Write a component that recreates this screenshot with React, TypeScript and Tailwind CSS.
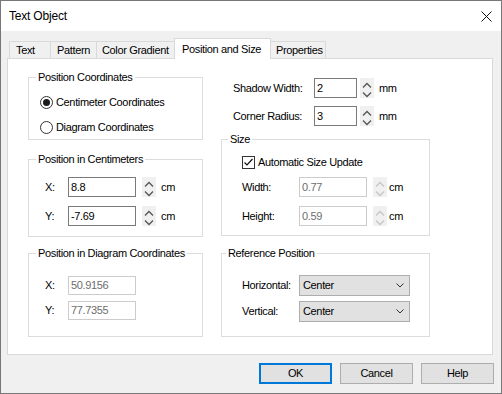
import React from 'react';

function Spin({ disabled }: { disabled?: boolean }) {
  const c = disabled ? '#c6c6c6' : '#555555';
  return (
    <div className="w-[14px] h-[20px] bg-[#f0f0f0] shrink-0">
      <svg width="14" height="20" viewBox="0 0 14 20">
        <path d="M3 9.5 L7 5.5 L11 9.5" fill="none" stroke={c} strokeWidth="1.3" />
        <path d="M3 14.5 L7 18.5 L11 14.5" fill="none" stroke={c} strokeWidth="1.3" />
      </svg>
    </div>
  );
}

function Field({ value, w, h = 20, disabled }: { value: string; w: string; h?: number; disabled?: boolean }) {
  return (
    <div
      className={`${w} ${h === 19 ? 'h-[19px]' : 'h-[20px]'} border bg-white flex items-center pl-[2px] shrink-0 ${
        disabled ? 'border-[#cccccc] text-[#6d6d6d]' : 'border-[#7a7a7a] text-black'
      }`}
    >
      {value}
    </div>
  );
}

function GroupBox({
  label,
  labelLeft,
  className,
  children,
}: {
  label: string;
  labelLeft: string;
  className: string;
  children: React.ReactNode;
}) {
  return (
    <div className={`relative border border-[#dcdcdc] flex flex-col ${className}`}>
      <span className={`absolute ${labelLeft} top-[-7px] px-[2px] bg-white leading-[13px] whitespace-nowrap`}>{label}</span>
      {children}
    </div>
  );
}

function Radio({ checked, label }: { checked?: boolean; label: string }) {
  return (
    <div className="h-[16px] flex items-center">
      <svg width="13" height="13" viewBox="0 0 13 13" className="shrink-0">
        <circle cx="6.5" cy="6.5" r="6" fill="white" stroke="#333333" strokeWidth="1" />
        {checked && <circle cx="6.5" cy="6.5" r="3.5" fill="#1a1a1a" />}
      </svg>
      <span className="ml-[3px] whitespace-nowrap">{label}</span>
    </div>
  );
}

function Select({ value }: { value: string }) {
  return (
    <div className="w-[111px] h-[21px] border border-[#adadad] bg-[#e1e1e1] flex items-center justify-between pl-[3px] pr-[5px]">
      <span>{value}</span>
      <svg width="8" height="5" viewBox="0 0 8 5">
        <path d="M0.5 0.5 L4 4 L7.5 0.5" fill="none" stroke="#333333" strokeWidth="1" />
      </svg>
    </div>
  );
}

export default function App() {
  return (
    <div className="w-[502px] h-[394px] border border-[#777777] bg-[#f0f0f0] flex flex-col text-[11px] tracking-[-0.35px] text-black font-['Liberation_Sans',Arial,sans-serif] overflow-hidden">
      {/* Title bar */}
      <div className="h-[30px] bg-white flex items-center justify-between pl-[8px] pr-[9px] shrink-0">
        <span className="text-[12px] tracking-[-0.2px]">Text Object</span>
        <svg width="11" height="11" viewBox="0 0 11 11">
          <path d="M0.5 0.5 L10.5 10.5 M10.5 0.5 L0.5 10.5" stroke="#111111" strokeWidth="1" />
        </svg>
      </div>

      {/* Body */}
      <div className="flex-1 flex flex-col pl-[6px] pr-[7px] pt-[7px]">
        {/* Tabs */}
        <div className="h-[20px] flex items-end ml-[2px] relative z-10">
          <div className="w-[42px] h-[17px] border border-b-0 border-[#d9d9d9] bg-[#f0f0f0] flex items-center pl-[6px]">Text</div>
          <div className="w-[47px] h-[17px] -ml-px border border-b-0 border-[#d9d9d9] bg-[#f0f0f0] flex items-center pl-[6px]">Pattern</div>
          <div className="w-[79px] h-[17px] -ml-px border border-b-0 border-[#d9d9d9] bg-[#f0f0f0] flex items-center pl-[5px] whitespace-nowrap">Color Gradient</div>
          <div className="w-[97px] h-[21px] -ml-px -mb-px border border-b-0 border-[#d9d9d9] bg-white flex items-center pl-[7px] whitespace-nowrap relative z-10">Position and Size</div>
          <div className="w-[56px] h-[17px] -ml-px border border-b-0 border-[#d9d9d9] bg-[#f0f0f0] flex items-center pl-[5px]">Properties</div>
        </div>

        {/* Panel */}
        <div className="w-[486px] h-[297px] border border-[#d9d9d9] bg-white flex pl-[20px] gap-[18px]">
          {/* Left column */}
          <div className="w-[175px] flex flex-col pt-[18px]">
            <GroupBox label="Position Coordinates" labelLeft="left-[7px]" className="h-[63px] pt-[16px] pl-[11px] gap-[9px]">
              <Radio checked label="Centimeter Coordinates" />
              <Radio label="Diagram Coordinates" />
            </GroupBox>

            <GroupBox label="Position in Centimeters" labelLeft="left-[7px]" className="mt-[19px] h-[78px] pt-[17px] pl-[16px] gap-[9px]">
              <div className="h-[20px] flex items-center">
                <span className="w-[23px]">X:</span>
                <Field value="8.8" w="w-[68px]" />
                <div className="ml-[6px]"><Spin /></div>
                <span className="ml-[5px]">cm</span>
              </div>
              <div className="h-[20px] flex items-center">
                <span className="w-[23px]">Y:</span>
                <Field value="-7.69" w="w-[68px]" />
                <div className="ml-[6px]"><Spin /></div>
                <span className="ml-[5px]">cm</span>
              </div>
            </GroupBox>

            <GroupBox label="Position in Diagram Coordinates" labelLeft="left-[7px]" className="mt-[16px] h-[84px] pt-[22px] pl-[16px] gap-[6px]">
              <div className="h-[19px] flex items-center">
                <span className="w-[23px]">X:</span>
                <Field value="50.9156" w="w-[68px]" h={19} disabled />
              </div>
              <div className="h-[19px] flex items-center">
                <span className="w-[23px]">Y:</span>
                <Field value="77.7355" w="w-[68px]" h={19} disabled />
              </div>
            </GroupBox>
          </div>

          {/* Right column */}
          <div className="w-[209px] flex flex-col pt-[19px]">
            <div className="h-[20px] flex items-center pl-[12px]">
              <span className="w-[81px] whitespace-nowrap">Shadow Width:</span>
              <Field value="2" w="w-[43px]" />
              <div className="ml-[3px]"><Spin /></div>
              <span className="ml-[5px]">mm</span>
            </div>
            <div className="mt-[8px] h-[20px] flex items-center pl-[12px]">
              <span className="w-[81px] whitespace-nowrap">Corner Radius:</span>
              <Field value="3" w="w-[43px]" />
              <div className="ml-[3px]"><Spin /></div>
              <span className="ml-[5px]">mm</span>
            </div>

            <GroupBox label="Size" labelLeft="left-[6px]" className="mt-[13px] h-[97px] pt-[15px] pl-[20px]">
              <div className="h-[15px] flex items-center">
                <svg width="13" height="13" viewBox="0 0 13 13" className="shrink-0">
                  <rect x="0.5" y="0.5" width="12" height="12" fill="white" stroke="#333333" strokeWidth="1" />
                  <path d="M2.5 6.5 L5 9 L10.5 3" fill="none" stroke="#111111" strokeWidth="1.2" />
                </svg>
                <span className="ml-[3px] whitespace-nowrap">Automatic Size Update</span>
              </div>
              <div className="mt-[7px] h-[20px] flex items-center">
                <span className="w-[57px]">Width:</span>
                <Field value="0.77" w="w-[68px]" disabled />
                <div className="ml-[6px]"><Spin disabled /></div>
                <span className="ml-[2px]">cm</span>
              </div>
              <div className="mt-[9px] h-[20px] flex items-center">
                <span className="w-[57px]">Height:</span>
                <Field value="0.59" w="w-[68px]" disabled />
                <div className="ml-[6px]"><Spin disabled /></div>
                <span className="ml-[2px]">cm</span>
              </div>
            </GroupBox>

            <GroupBox label="Reference Position" labelLeft="left-[4px]" className="mt-[17px] h-[84px] pt-[21px] pl-[20px] gap-[5px]">
              <div className="h-[21px] flex items-center">
                <span className="w-[57px]">Horizontal:</span>
                <Select value="Center" />
              </div>
              <div className="h-[21px] flex items-center">
                <span className="w-[57px]">Vertical:</span>
                <Select value="Center" />
              </div>
            </GroupBox>
          </div>
        </div>

        {/* Buttons */}
        <div className="mt-[8px] flex justify-end gap-[8px]">
          <div className="w-[73px] h-[21px] border-2 border-[#0078d7] bg-[#e1e1e1] flex items-center justify-center">OK</div>
          <div className="w-[73px] h-[21px] border border-[#adadad] bg-[#e1e1e1] flex items-center justify-center">Cancel</div>
          <div className="w-[73px] h-[21px] border border-[#adadad] bg-[#e1e1e1] flex items-center justify-center">Help</div>
        </div>
      </div>
    </div>
  );
}
